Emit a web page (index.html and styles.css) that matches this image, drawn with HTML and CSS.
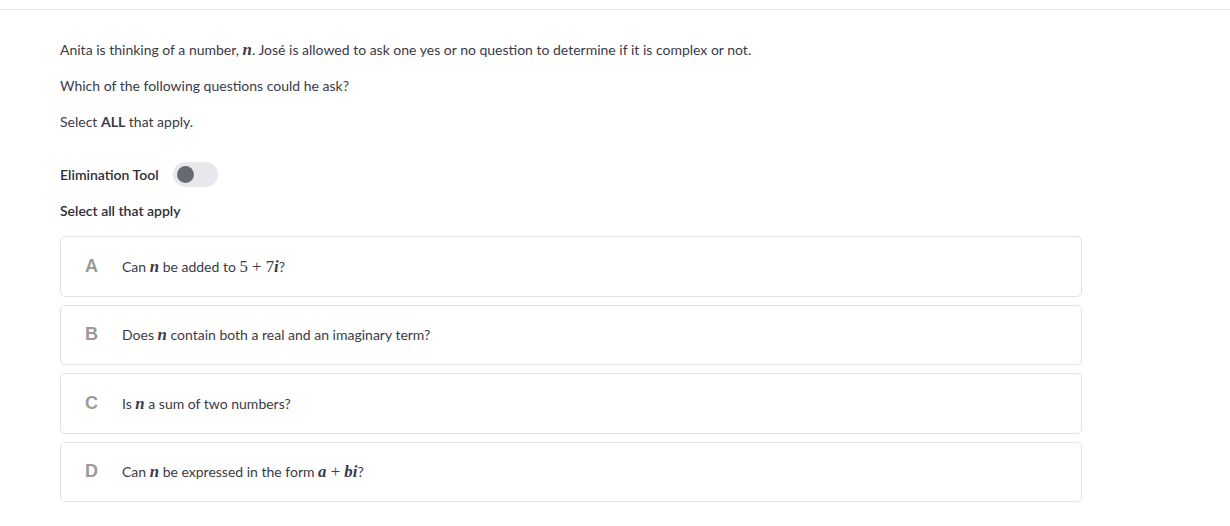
FILE: index.html
```html
<!DOCTYPE html>
<html>
<head>
<meta charset="utf-8">
<link rel="stylesheet" href="styles.css">
</head>
<body>
<div class="topbar"></div>
<main class="content">
  <p class="para">Anita is thinking of a number, <span class="m">n</span>. José is allowed to ask one yes or no question to determine if it is complex or not.</p>
  <p class="para">Which of the following questions could he ask?</p>
  <p class="para">Select <b>ALL</b> that apply.</p>
  <div class="tool">
    <span class="tool-label">Elimination Tool</span>
    <span class="toggle"><span class="knob"></span></span>
  </div>
  <div class="instr">Select all that apply</div>
  <div class="options">
    <div class="opt"><span class="letter">A</span><span class="otext">Can <span class="m">n</span> be added to <span class="mr">5 + 7</span><span class="m">i</span>?</span></div>
    <div class="opt"><span class="letter">B</span><span class="otext">Does <span class="m">n</span> contain both a real and an imaginary term?</span></div>
    <div class="opt"><span class="letter">C</span><span class="otext">Is <span class="m">n</span> a sum of two numbers?</span></div>
    <div class="opt"><span class="letter">D</span><span class="otext">Can <span class="m">n</span> be expressed in the form <span class="m">a</span><span class="mr"> + </span><span class="m">bi</span>?</span></div>
  </div>
</main>
</body>
</html>
```
FILE: styles.css
```css
html, body {
  margin: 0;
  padding: 0;
  background: #fff;
}
body {
  font-family: Lato, "Open Sans", sans-serif;
  color: #3a3a48;
  font-size: 14px;
}
.topbar {
  height: 9px;
  border-bottom: 1px solid #e6e6e6;
}
.content {
  padding: 32px 0 0 60px;
  width: 1022px;
}
.para {
  margin: 0 0 20px 0;
  line-height: 16px;
}
.para b {
  font-weight: 700;
}
.m {
  font-family: "Liberation Serif", "DejaVu Serif", serif;
  font-style: italic;
  font-size: 1.2em;
  font-weight: 700;
  line-height: 0;
}
.mr {
  font-family: "Liberation Serif", "DejaVu Serif", serif;
  font-size: 1.2em;
  font-weight: 400;
  line-height: 0;
}
.tool {
  display: flex;
  align-items: center;
  margin-top: 32px;
  height: 25px;
}
.tool-label {
  font-weight: 600;
  color: #2e2e3a;
  margin-right: 14px;
}
.toggle {
  width: 45px;
  height: 25px;
  border-radius: 13px;
  background: #e8e8ec;
  display: flex;
  align-items: center;
  padding-left: 4px;
  box-sizing: border-box;
}
.knob {
  width: 17px;
  height: 17px;
  border-radius: 50%;
  background: #666a75;
}
.instr {
  margin-top: 12px;
  font-weight: 600;
  color: #2e2e3a;
  line-height: 24px;
}
.options {
  margin-top: 13px;
  display: flex;
  flex-direction: column;
  gap: 8px;
}
.opt {
  height: 60.5px;
  box-sizing: border-box;
  border: 1px solid #e2e2e2;
  border-radius: 5px;
  display: flex;
  align-items: center;
  padding-left: 24px;
}
.letter {
  width: 37px;
  font-family: "Liberation Sans", Arial, sans-serif;
  font-weight: 700;
  font-size: 18px;
  color: #9a9a9a;
}
.otext {
  color: #3a3a48;
}
```
